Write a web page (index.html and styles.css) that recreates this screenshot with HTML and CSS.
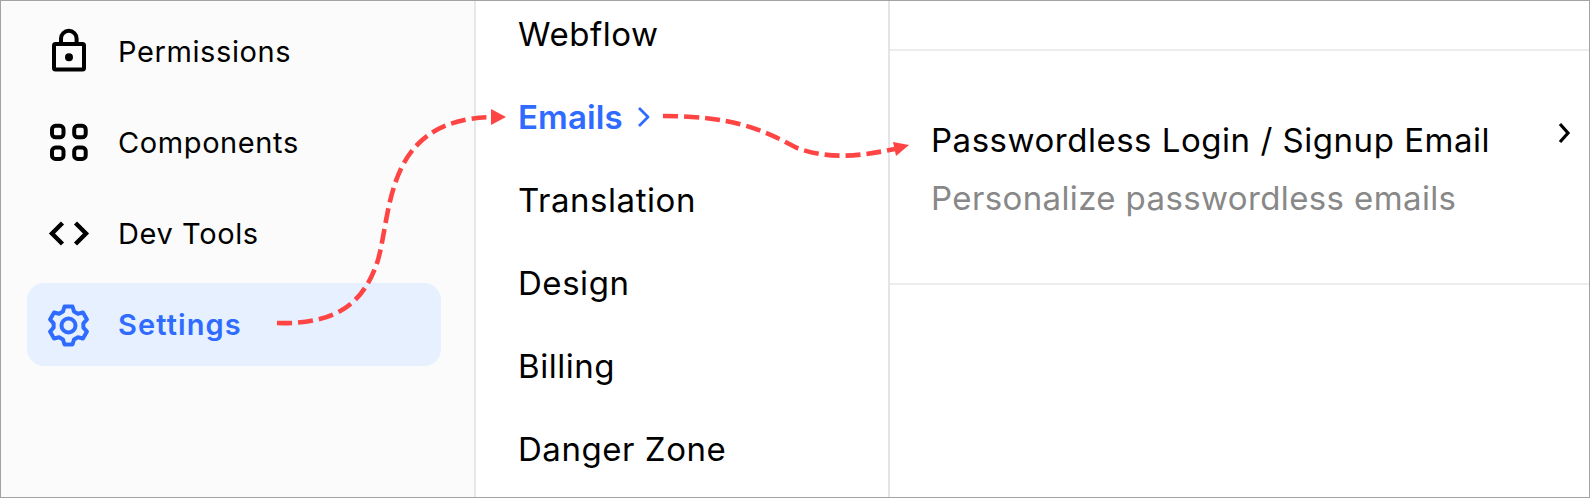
FILE: index.html
```html
<!DOCTYPE html>
<html lang="en">
<head>
<meta charset="utf-8">
<title>Settings</title>
<link rel="stylesheet" href="styles.css">
</head>
<body>
<div class="frame">
  <nav class="side">
    <a class="side-item">
      <svg class="ico" viewBox="0 0 48 48" fill="none" stroke="currentColor" stroke-width="4" stroke-linejoin="round"><rect x="8" y="16" width="30" height="25.5" rx="1.5"/><path d="M15 16V10.6a7.8 7.8 0 0 1 15.6 0V16"/><circle cx="23" cy="29.2" r="4" fill="currentColor" stroke="none"/></svg>
      <span>Permissions</span>
    </a>
    <a class="side-item">
      <svg class="ico" viewBox="0 0 48 48" fill="none" stroke="currentColor" stroke-width="4"><rect x="6" y="6.8" width="11.5" height="11.5" rx="3.6"/><rect x="28.2" y="6.8" width="11.5" height="11.5" rx="3.6"/><rect x="6" y="28.5" width="11.5" height="11.5" rx="3.6"/><rect x="28.2" y="28.5" width="11.5" height="11.5" rx="3.6"/></svg>
      <span>Components</span>
    </a>
    <a class="side-item">
      <svg class="ico" viewBox="0 0 48 48" fill="none" stroke="currentColor" stroke-width="4.4"><path d="M16.5 13 6 23.5 16.5 34"/><path d="M29.5 13 40 23.5 29.5 34"/></svg>
      <span>Dev Tools</span>
    </a>
    <a class="side-item active">
      <svg class="ico" viewBox="0 0 48 48" fill="none" stroke="currentColor" stroke-width="4" stroke-linejoin="round"><g transform="translate(22.5 24.5)"><path d="M-5.5-14-4-19H4L5.5-14 9.37-11.76 14.45-12.96 18.45-6.04 14.87-2.24V2.24L18.45 6.04 14.45 12.96 9.37 11.76 5.5 14 4 19H-4L-5.5 14-9.37 11.76-14.45 12.96-18.45 6.04-14.87 2.24V-2.24L-18.45-6.04-14.45-12.96-9.37-11.76Z"/><circle r="7"/></g></svg>
      <span>Settings</span>
    </a>
  </nav>
  <div class="mid">
    <a class="mid-item">Webflow</a>
    <a class="mid-item current">Emails
      <svg class="chev" viewBox="0 0 14 22" fill="none" stroke="currentColor" stroke-width="2.8" stroke-linejoin="round"><path d="M2 2l9 9-9 9"/></svg>
    </a>
    <a class="mid-item">Translation</a>
    <a class="mid-item">Design</a>
    <a class="mid-item">Billing</a>
    <a class="mid-item">Danger Zone</a>
  </div>
  <div class="detail">
    <div class="detail-top"></div>
    <div class="row">
      <div class="row-text">
        <div class="row-title">Passwordless Login / Signup Email</div>
        <div class="row-sub">Personalize passwordless emails</div>
      </div>
      <svg class="row-chev" viewBox="0 0 14 22" fill="none" stroke="currentColor" stroke-width="3.2"><path d="M3 2l8 9-8 9"/></svg>
    </div>
  </div>
  <svg class="arrows" viewBox="0 0 1590 498" fill="none">
    <path class="dash" d="M277 323C340 325 365 300 378 260C392 210 385 120 491 117"/>
    <path class="head" d="M491 109l15 8-15 8z"/>
    <path class="dash" d="M663 116C730 116 760 128 797 148C830 160 860 156 895 149"/>
    <path class="head" d="M893 142l16 3-13 11z"/>
  </svg>
</div>
</body>
</html>
```
FILE: styles.css
```css
* { box-sizing: border-box; }
html, body { margin: 0; padding: 0; }
body { background: #fff; font-family: Inter, "Liberation Sans", sans-serif; color: #000; }
.frame {
  position: relative;
  width: 1590px;
  height: 498px;
  display: flex;
  border: 1px solid #a3a3a3;
  overflow: hidden;
}
.side {
  width: 475px;
  flex: none;
  background: #fbfbfb;
  border-right: 2px solid #e8e8e8;
  padding: 9px 0 0 26px;
  display: flex;
  flex-direction: column;
  gap: 8px;
}
.side-item {
  width: 414px;
  height: 83px;
  display: flex;
  align-items: center;
  gap: 24px;
  padding-left: 19px;
  border-radius: 17px;
  font-size: 29px;
  letter-spacing: .6px;
}
.ico { width: 48px; height: 48px; flex: none; }
.side-item.active { background: #e6f0ff; color: #2f6bff; font-weight: 600; letter-spacing: 1.1px; }
.mid {
  width: 412px;
  flex: none;
  padding: 0 0 0 42px;
  margin-top: -9px;
}
.mid-item {
  height: 83px;
  display: flex;
  align-items: center;
  font-size: 33px;
  letter-spacing: .55px;
}
.mid-item.current { color: #2f6bff; font-weight: 600; letter-spacing: .1px; }
.chev { width: 14px; height: 22px; margin-left: 14px; }
.detail { flex: 1; border-left: 2px solid #e4e4e8; }
.detail-top { height: 50px; border-bottom: 2px solid #ececec; }
.row {
  height: 234px;
  border-bottom: 2px solid #ececec;
  padding: 60px 18px 0 41px;
  display: flex;
  justify-content: space-between;
  align-items: flex-start;
}
.row-title { font-size: 33px; line-height: 58px; letter-spacing: .52px; }
.row-sub { font-size: 33px; line-height: 58px; color: #888; letter-spacing: .38px; }
.row-chev { width: 14px; height: 22px; margin-top: 11px; color: #000; flex: none; }
.arrows { position: absolute; left: -1px; top: -1px; width: 1590px; height: 498px; pointer-events: none; }
.dash { stroke: #ff4444; stroke-width: 4.6; stroke-dasharray: 15 6; }
.head { fill: #ff4444; }
```
